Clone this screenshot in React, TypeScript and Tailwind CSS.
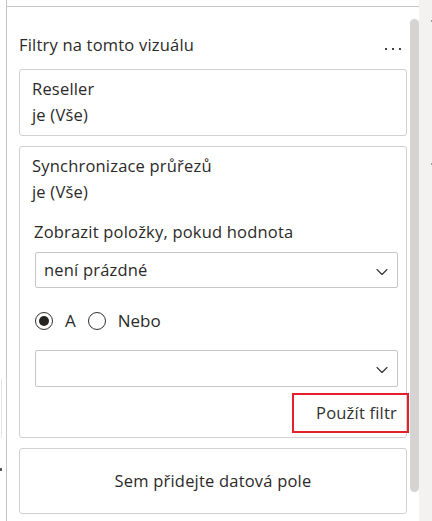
import { ChevronDown } from "lucide-react";

const font = { fontFamily: '"Open Sans", "Liberation Sans", sans-serif' };

const Radio = ({ checked }: { checked?: boolean }) => (
  <span className="w-[18px] h-[18px] rounded-full border border-[#323130] flex items-center justify-center">
    {checked && <span className="w-[10px] h-[10px] rounded-full bg-[#252423]" />}
  </span>
);

const Select = ({ value, h }: { value?: string; h: string }) => (
  <div
    className={`${h} border border-[#c8c6c4] rounded-[2px] flex items-center justify-between pl-[8px] pr-[5px]`}
  >
    <span className="text-[16.5px] leading-[20px] tracking-[0.2px]">{value}</span>
    <ChevronDown className="w-5 h-5 mt-[3px] text-[#323130]" strokeWidth={1.3} />
  </div>
);

export default function App() {
  return (
    <div
      className="w-[432px] h-[521px] flex bg-white text-[#2b2a29] overflow-hidden"
      style={font}
    >
      {/* left edge leftovers */}
      <div className="w-[6px] flex flex-col">
        <div className="mt-[379px] h-[59px] w-[2px] border-r border-[#e6e4e2]" />
        <div className="mt-[30px] w-[2px] h-[3px] bg-[#555]" />
      </div>

      {/* filter pane */}
      <div className="w-[413px] border-l border-[#c8c6c4] flex flex-col">
        <div className="h-[6px]" />
        <div className="flex-1 border-t border-[#c8c6c4] flex">
          <div className="w-[403px] pl-[12px] pr-[3px] pt-[28px] text-[16.5px] tracking-[0.2px]">
            <div className="flex items-end justify-between pr-[6px]">
              <span className="leading-[20px]">Filtry na tomto vizuálu</span>
              <span className="flex gap-[5px] mb-[5px]">
                <span className="w-[2px] h-[2px] bg-[#444]" />
                <span className="w-[2px] h-[2px] bg-[#444]" />
                <span className="w-[2px] h-[2px] bg-[#444]" />
              </span>
            </div>

            <div className="mt-[14px] border border-[#d2d0ce] rounded-[3px] pl-[12px] pt-[6px] pb-[7px] leading-[26px]">
              <div>Reseller</div>
              <div>je (Vše)</div>
            </div>

            <div className="mt-[10px] border border-[#d2d0ce] rounded-[3px] pl-[12px] pr-[8px] pt-[6px] pb-[4px]">
              <div className="leading-[26px]">Synchronizace průřezů</div>
              <div className="leading-[26px]">je (Vše)</div>
              <div className="pl-[3px] mt-[17px]">
                <div className="leading-[20px] -ml-[1px]">Zobrazit položky, pokud hodnota</div>
                <div className="mt-[10px]">
                  <Select value="není prázdné" h="h-[36px]" />
                </div>
                <div className="mt-[24px] h-[18px] flex items-center gap-[12px] text-[17px] tracking-normal">
                  <Radio checked />
                  <span>A</span>
                  <Radio />
                  <span>Nebo</span>
                </div>
                <div className="mt-[20px]">
                  <Select h="h-[37px]" />
                </div>
                <div className="mt-[6px] flex justify-end -mr-[11px]">
                  <button className="w-[117px] h-[40px] border-2 border-[#e3202b] flex items-center justify-end pr-[10px] text-[#323130]">
                    Použít filtr
                  </button>
                </div>
              </div>
            </div>

            <div className="mt-[10px] h-[66px] border border-[#d2d0ce] rounded-[3px] flex items-center justify-center">
              Sem přidejte datová pole
            </div>
          </div>

          {/* scrollbar */}
          <div className="w-[9px]">
            <div className="mt-[12px] h-[473px] rounded-full bg-[#d5d4d3]" />
          </div>
        </div>
      </div>

      {/* right strip */}
      <div className="w-[13px] bg-[#f3f2f1] flex flex-col items-end">
        <div className="mt-[20px] w-[1px] h-[2px] bg-[#999]" />
        <div className="mt-[141px] w-[1px] h-[2px] bg-[#999]" />
      </div>
    </div>
  );
}
